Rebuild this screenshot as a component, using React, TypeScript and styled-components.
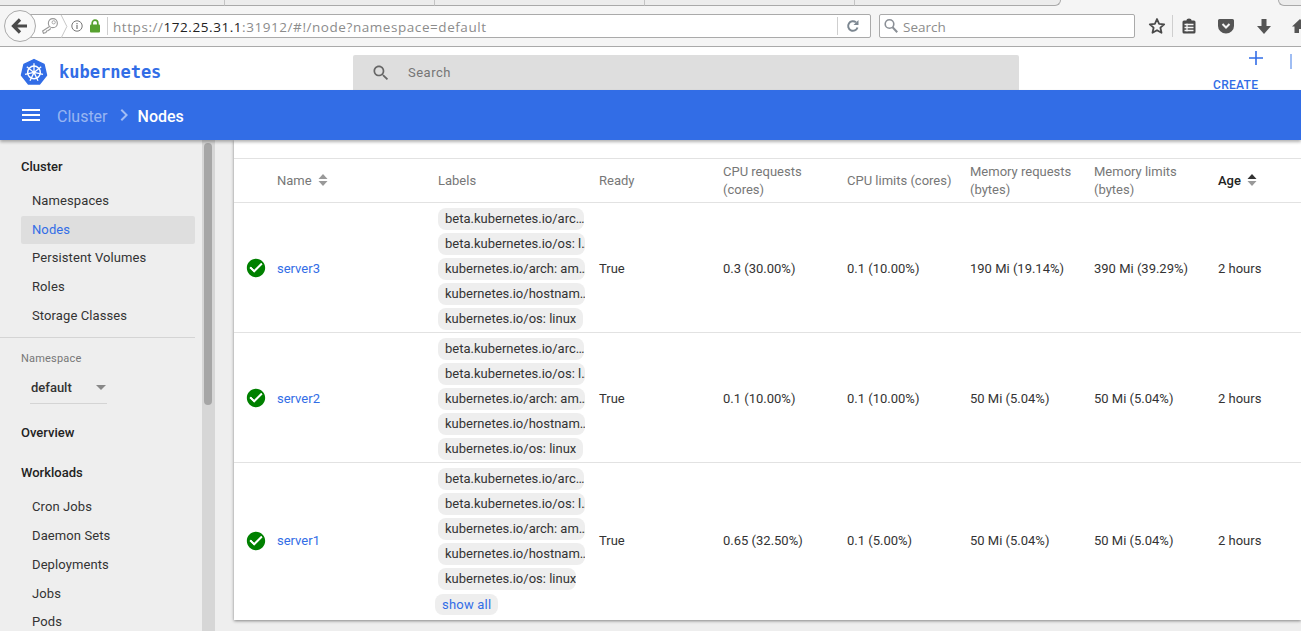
import styled, { createGlobalStyle } from 'styled-components'

type Node = {
  name: string
  cpuRequests: string
  cpuLimits: string
  memRequests: string
  memLimits: string
  showAll?: boolean
}

const labels = [
  'beta.kubernetes.io/arc…',
  'beta.kubernetes.io/os: l…',
  'kubernetes.io/arch: am…',
  'kubernetes.io/hostnam…',
  'kubernetes.io/os: linux',
]

const nodes: Node[] = [
  { name: 'server3', cpuRequests: '0.3 (30.00%)', cpuLimits: '0.1 (10.00%)', memRequests: '190 Mi (19.14%)', memLimits: '390 Mi (39.29%)' },
  { name: 'server2', cpuRequests: '0.1 (10.00%)', cpuLimits: '0.1 (10.00%)', memRequests: '50 Mi (5.04%)', memLimits: '50 Mi (5.04%)' },
  { name: 'server1', cpuRequests: '0.65 (32.50%)', cpuLimits: '0.1 (5.00%)', memRequests: '50 Mi (5.04%)', memLimits: '50 Mi (5.04%)', showAll: true },
]

const spokes = [0, 1, 2, 3, 4, 5, 6].map((i) => (i * 360) / 7)

const heptagon = spokes
  .map((deg) => {
    const rad = ((deg - 90) * Math.PI) / 180
    return `${(14 + 12.8 * Math.cos(rad)).toFixed(2)},${(14.4 + 12.8 * Math.sin(rad)).toFixed(2)}`
  })
  .join(' ')

const KubeLogo = () => (
  <svg width='28' height='28' viewBox='0 0 28 28'>
    <polygon points={heptagon} fill='#326de6' stroke='#326de6' strokeWidth='1.5' strokeLinejoin='round' />
    <circle cx='14' cy='14.4' r='6.3' fill='none' stroke='#fff' strokeWidth='1.5' />
    <circle cx='14' cy='14.4' r='1.5' fill='#fff' />
    {spokes.map((deg) => (
      <line key={deg} x1='14' y1='14.4' x2='14' y2='5.2' stroke='#fff' strokeWidth='1.3' transform={`rotate(${deg} 14 14.4)`} />
    ))}
  </svg>
)

const SortIcon = ({ active }: { active?: boolean }) => (
  <SortSvg width='10' height='14' viewBox='0 0 10 14'>
    <path d='M5 1l4.5 5h-9z' fill={active ? '#333' : '#999'} />
    <path d='M5 13l4.5-5h-9z' fill='#999' />
  </SortSvg>
)

const CheckCircle = () => (
  <svg width='22' height='22' viewBox='0 0 24 24'>
    <path fill='#008000' d='M12 2C6.48 2 2 6.48 2 12s4.48 10 10 10 10-4.48 10-10S17.52 2 12 2zm-2 15l-5-5 1.41-1.41L10 14.17l7.59-7.59L19 8l-9 9z' />
    <path fill='#fff' d='M10 17l-5-5 1.41-1.41L10 14.17l7.59-7.59L19 8z' />
  </svg>
)

const App = () => {
  return (
    <Page>
      <GlobalStyle />
      <TabStrip>
        <Tab />
        <Tab />
        <Tab />
        <Tab />
        <LastTab />
        <ActiveTab />
        <NextTab />
      </TabStrip>
      <Toolbar>
        <BackButton>
          <svg width='20' height='20' viewBox='0 0 20 20'>
            <path d='M10 3.5L3.5 10l6.5 6.5M4 10h13' fill='none' stroke='#4a4a4a' strokeWidth='3.2' />
          </svg>
        </BackButton>
        <UrlBar>
          <KeyIcon width='18' height='18' viewBox='0 0 22 22'>
            <circle cx='14.5' cy='7.5' r='5.5' fill='none' stroke='#999' strokeWidth='1.4' />
            <circle cx='15.500' cy='6.500' r='2' fill='none' stroke='#999' />
            <path d='M10.500 11.500L2 17l1 3 3-1 1-2 2-.5 3-2.500' fill='none' stroke='#999' strokeWidth='1.4' />
          </KeyIcon>
          <IdentityChevron width='8' height='23' viewBox='0 0 8 24'>
            <path d='M1 0l6 12-6 12' fill='none' stroke='#c4c4c4' />
          </IdentityChevron>
          <InfoIcon width='12' height='12' viewBox='0 0 12 12'>
            <circle cx='6' cy='6' r='5.2' fill='none' stroke='#777' />
            <path d='M6 5v4M6 3v1.2' stroke='#777' strokeWidth='1.2' />
          </InfoIcon>
          <LockIcon width='12' height='14' viewBox='0 0 12 14'>
            <rect x='1' y='5.500' width='10' height='8' rx='1' fill='#57a12f' />
            <path d='M3.200 6V4a2.800 2.800 0 0 1 5.600 0v2' fill='none' stroke='#57a12f' strokeWidth='1.7' />
          </LockIcon>
          <UrlDivider />
          <UrlText>
            https://<strong>172.25.31.1</strong>:31912/#!/node?namespace=default
          </UrlText>
          <ReloadDivider />
          <ReloadSlot>
            <svg width='14' height='14' viewBox='0 0 14 14'>
              <path d='M11.500 8.500A4.800 4.800 0 1 1 10 3.300' fill='none' stroke='#7c8791' strokeWidth='2' />
              <path d='M12.500 1v5h-5z' fill='#7c8791' />
            </svg>
          </ReloadSlot>
        </UrlBar>
        <SearchBar>
          <svg width='16' height='16' viewBox='0 0 16 16'>
            <circle cx='6.500' cy='6' r='4.300' fill='none' stroke='#8a8f96' strokeWidth='1.600' />
            <path d='M9.600 9.200l4.600 5' stroke='#8a8f96' strokeWidth='2' />
          </svg>
          <SearchBarText>Search</SearchBarText>
        </SearchBar>
        <ToolIcons>
          <svg width='18' height='18' viewBox='0 0 18 18'>
            <path d='M9 2l2.100 4.800 5.100.5-3.800 3.400 1.100 5.100L9 13.200l-4.500 2.600 1.100-5.100-3.800-3.400 5.100-.5z' fill='none' stroke='#4a4a4a' strokeWidth='1.800' strokeLinejoin='round' />
          </svg>
          <ToolDivider />
          <ClipSlot>
            <svg width='16' height='16' viewBox='0 0 16 16'>
              <path fill='#4a4a4a' d='M5.500 2.500V2a2.500 1.600 0 0 1 5 0v.5H13a1.500 1.500 0 0 1 1.500 1.500v10a1.500 1.500 0 0 1-1.500 1.500H3A1.500 1.500 0 0 1 1.500 14V4A1.500 1.500 0 0 1 3 2.500z' />
              <path stroke='#f5f5f5' strokeWidth='1.300' d='M3.500 6.500h9M3.500 9.500h9M3.500 12.500h9M6 5.500v8' />
            </svg>
          </ClipSlot>
          <PocketSlot>
            <svg width='16' height='16' viewBox='0 0 16 16'>
              <path fill='#555' d='M1.500 1h13A1.500 1.500 0 0 1 16 2.500V8a8 7.500 0 0 1-16 0V2.500A1.500 1.500 0 0 1 1.500 1z' />
              <path d='M4.500 6L8 9.500 11.500 6' fill='none' stroke='#f5f5f5' strokeWidth='2' />
            </svg>
          </PocketSlot>
          <DownloadSlot>
            <svg width='16' height='17' viewBox='0 0 16 17'>
              <path fill='#555' d='M5.500 1h5v7H15l-7 8-7-8h4.500z' />
            </svg>
          </DownloadSlot>
          <HomeSlot>
            <svg width='16' height='16' viewBox='0 0 16 16'>
              <path fill='#555' d='M8 1L0 8.500h2.500V15H7v-4h2v4h4.500V8.500H16z' />
            </svg>
          </HomeSlot>
        </ToolIcons>
      </Toolbar>

      <AppHeader>
        <Brand>
          <KubeLogo />
          <BrandName>kubernetes</BrandName>
        </Brand>
        <SearchBox>
          <svg width='20' height='20' viewBox='0 0 24 24'>
            <path fill='#666' d='M15.500 14h-.79l-.28-.27C15.410 12.590 16 11.110 16 9.500 16 5.910 13.090 3 9.500 3S3 5.910 3 9.500 5.910 16 9.500 16c1.610 0 3.090-.59 4.230-1.570l.27.28v.79l5 4.990L20.490 19l-4.990-5zm-6 0C7.010 14 5 11.990 5 9.500S7.010 5 9.500 5 14 7.010 14 9.500 11.990 14 9.500 14z' />
          </svg>
          <SearchPlaceholder>Search</SearchPlaceholder>
        </SearchBox>
        <CreateButton>
          <PlusIcon width='24' height='24' viewBox='0 0 24 24'>
            <path fill='#326de6' d='M19 12.800h-6.200V19h-1.600v-6.200H5v-1.600h6.200V5h1.600v6.200H19z' />
          </PlusIcon>
          <CreateLabel>CREATE</CreateLabel>
        </CreateButton>
        <HeaderTick />
      </AppHeader>

      <BlueBar>
        <svg width='24' height='24' viewBox='0 0 24 24'>
          <path fill='#fff' d='M3 18h18v-2H3v2zm0-5h18v-2H3v2zm0-7v2h18V6H3z' />
        </svg>
        <Crumb>Cluster</Crumb>
        <CrumbChevron width='24' height='24' viewBox='0 0 24 24'>
          <path fill='rgba(255,255,255,.55)' d='M10 6L8.590 7.410 13.170 12l-4.580 4.590L10 18l6-6z' />
        </CrumbChevron>
        <CrumbCurrent>Nodes</CrumbCurrent>
      </BlueBar>

      <Main>
        <Sidebar>
          <SectionTitle>Cluster</SectionTitle>
          <NavGroup>
            <NavItem>Namespaces</NavItem>
            <NavItem $active>Nodes</NavItem>
            <NavItem>Persistent Volumes</NavItem>
            <NavItem>Roles</NavItem>
            <NavItem>Storage Classes</NavItem>
          </NavGroup>
          <NavDivider />
          <NamespaceLabel>Namespace</NamespaceLabel>
          <NamespaceSelect>
            default
            <SelectArrow />
          </NamespaceSelect>
          <SectionTitle>Overview</SectionTitle>
          <WorkloadsTitle>Workloads</WorkloadsTitle>
          <NavGroup>
            <NavItem>Cron Jobs</NavItem>
            <NavItem>Daemon Sets</NavItem>
            <NavItem>Deployments</NavItem>
            <NavItem>Jobs</NavItem>
            <NavItem>Pods</NavItem>
          </NavGroup>
        </Sidebar>
        <ScrollTrack>
          <ScrollThumb />
        </ScrollTrack>
        <Content>
          <Card>
            <CardTop />
            <HeaderRow>
              <span />
              <HeadCell>
                Name <SortIcon />
              </HeadCell>
              <HeadCell>Labels</HeadCell>
              <HeadCell>Ready</HeadCell>
              <HeadCell>
                CPU requests
                <br />
                (cores)
              </HeadCell>
              <HeadCell>CPU limits (cores)</HeadCell>
              <HeadCell>
                Memory requests
                <br />
                (bytes)
              </HeadCell>
              <HeadCell>
                Memory limits
                <br />
                (bytes)
              </HeadCell>
              <HeadCell $active>
                Age <SortIcon active />
              </HeadCell>
            </HeaderRow>
            {nodes.map((node) => (
              <Row key={node.name}>
                <StatusCell>
                  <CheckCircle />
                </StatusCell>
                <NodeLink>{node.name}</NodeLink>
                <ChipList>
                  {labels.map((label) => (
                    <Chip key={label}>{label}</Chip>
                  ))}
                  {node.showAll && <ShowAll>show all</ShowAll>}
                </ChipList>
                <Cell>True</Cell>
                <Cell>{node.cpuRequests}</Cell>
                <Cell>{node.cpuLimits}</Cell>
                <Cell>{node.memRequests}</Cell>
                <Cell>{node.memLimits}</Cell>
                <Cell>2 hours</Cell>
              </Row>
            ))}
          </Card>
        </Content>
      </Main>
    </Page>
  )
}

export default App

const GlobalStyle = createGlobalStyle`
  html, body {
    margin: 0;
    height: 100%;
    overflow: hidden;
    background: #eeeeee;
    font-family: Roboto, "Liberation Sans", sans-serif;
  }
  * {
    box-sizing: border-box;
  }
`

const columns = '43px 161px 161px 124px 124px 123px 124px 124px 1fr'

const Page = styled.div`
  width: 1301px;
  height: 631px;
  overflow: hidden;
  display: flex;
  flex-direction: column;
`

const TabStrip = styled.div`
  height: 6px;
  flex: none;
  display: flex;
  background: #f5f5f5;
`

const Tab = styled.div`
  width: 225px;
  height: 6px;
  background: #ececec;
  border-bottom: 1px solid #a9a9a9;
  border-right: 1px solid #c4c4c4;
  &:nth-child(n + 2) {
    width: 210px;
  }
`

const LastTab = styled.div`
  width: 206px;
  height: 6px;
  background: #ececec;
  border-bottom: 1px solid #a9a9a9;
  border-right: 1px solid #a9a9a9;
  border-bottom-right-radius: 6px;
`

const ActiveTab = styled.div`
  width: 217px;
`

const NextTab = styled.div`
  flex: 1;
  border-bottom: 1px solid #a9a9a9;
  border-left: 1px solid #a9a9a9;
  border-bottom-left-radius: 6px;
  background: #ececec;
`

const Toolbar = styled.div`
  height: 41px;
  flex: none;
  display: flex;
  align-items: center;
  padding: 0 0 0 20px;
  background: #f5f5f5;
  border-bottom: 1px solid #aaaaaa;
  position: relative;
`

const BackButton = styled.div`
  position: absolute;
  left: 4px;
  top: 4px;
  z-index: 1;
  width: 32px;
  height: 32px;
  border-radius: 50%;
  border: 1px solid #aaaaaa;
  background: #f8f8f8;
  display: flex;
  align-items: center;
  justify-content: center;
`

const UrlBar = styled.div`
  width: 851px;
  flex: none;
  height: 24px;
  display: flex;
  align-items: center;
  padding-left: 20px;
  background: #ffffff;
  border: 1px solid #aaaaaa;
  border-radius: 2px;
`

const KeyIcon = styled.svg`
  flex: none;
`

const IdentityChevron = styled.svg`
  flex: none;
  margin-left: 1px;
`

const InfoIcon = styled.svg`
  flex: none;
  margin-left: 3px;
`

const LockIcon = styled.svg`
  flex: none;
  margin-left: 6px;
`

const UrlDivider = styled.div`
  width: 1px;
  height: 18px;
  background: #cfcfcf;
  margin: 0 5px 0 6px;
`

const ReloadDivider = styled(UrlDivider)`
  margin: 0;
`

const UrlText = styled.span`
  flex: 1;
  padding-top: 2px;
  font-family: "Open Sans", sans-serif;
  font-size: 13.5px;
  letter-spacing: 0.56px;
  color: #8c8c8c;
  strong {
    font-weight: 400;
    color: #222;
  }
`

const ReloadSlot = styled.div`
  width: 32px;
  display: flex;
  justify-content: center;
  padding-right: 3px;
`

const SearchBar = styled.div`
  width: 256px;
  flex: none;
  height: 24px;
  margin-left: 8px;
  display: flex;
  align-items: center;
  gap: 4px;
  padding-left: 3px;
  background: #fff;
  border: 1px solid #aaaaaa;
  border-radius: 2px;
`

const SearchBarText = styled.span`
  padding-top: 2px;
  font-family: "Open Sans", sans-serif;
  font-size: 13.5px;
  color: #8c8c8c;
`

const ToolIcons = styled.div`
  display: flex;
  flex: none;
  align-items: center;
  margin-left: 13px;
`

const ToolDivider = styled.div`
  width: 1px;
  height: 22px;
  background: #cfcfcf;
  margin-left: 6px;
`

const ClipSlot = styled.div`
  display: flex;
  margin-left: 8px;
`

const PocketSlot = styled.div`
  display: flex;
  margin-left: 21px;
`

const DownloadSlot = styled.div`
  display: flex;
  margin-left: 22px;
`

const HomeSlot = styled.div`
  display: flex;
  margin-left: 20px;
`

const AppHeader = styled.header`
  height: 43px;
  flex: none;
  display: flex;
  background: #ffffff;
  overflow: hidden;
`

const Brand = styled.div`
  width: 353px;
  display: flex;
  align-items: center;
  padding: 7px 0 0 20px;
  gap: 11px;
`

const BrandName = styled.span`
  font-family: "DejaVu Sans Mono", monospace;
  font-size: 17px;
  font-weight: 700;
  color: #326de6;
`

const SearchBox = styled.div`
  width: 666px;
  height: 35px;
  margin-top: 8px;
  display: flex;
  align-items: center;
  padding-left: 18px;
  gap: 17px;
  background: #dedede;
  border-radius: 2px 2px 0 0;
`

const SearchPlaceholder = styled.span`
  font-size: 13px;
  letter-spacing: 0.5px;
  color: #757575;
`

const CreateButton = styled.div`
  width: 46px;
  margin-left: 194px;
  display: flex;
  flex-direction: column;
  align-items: flex-start;
`

const PlusIcon = styled.svg`
  flex: none;
  align-self: flex-end;
  margin: -1px -9px 0 0;
`

const CreateLabel = styled.span`
  margin-top: 8px;
  font-size: 12px;
  font-weight: 500;
  letter-spacing: 0.3px;
  color: #326de6;
  line-height: 14px;
`

const HeaderTick = styled.div`
  width: 2px;
  height: 15px;
  margin: 7px 0 0 31px;
  background: #9fbdf3;
`

const BlueBar = styled.div`
  height: 50px;
  flex: none;
  display: flex;
  align-items: center;
  padding-left: 19px;
  background: #326de6;
  box-shadow: 0 2px 3px rgba(0, 0, 0, 0.3);
  position: relative;
  z-index: 2;
`

const Crumb = styled.span`
  margin: 2px 0 0 14px;
  font-size: 16px;
  color: rgba(255, 255, 255, 0.5);
`

const CrumbChevron = styled.svg`
  flex: none;
  margin-left: 4px;
`

const CrumbCurrent = styled.span`
  margin: 2px 0 0 2px;
  font-size: 16px;
  font-weight: 500;
  color: #fff;
`

const Main = styled.div`
  flex: 1;
  min-height: 0;
  display: flex;
`

const Sidebar = styled.nav`
  width: 202px;
  flex: none;
  padding: 17px 7px 0 0;
  background: #eeeeee;
  overflow: hidden;
  font-size: 13px;
`

const SectionTitle = styled.div`
  height: 20px;
  line-height: 20px;
  padding-left: 21px;
  font-weight: 500;
  color: #222;
`

const WorkloadsTitle = styled(SectionTitle)`
  margin-top: 20px;
`

const NavGroup = styled.div`
  display: flex;
  flex-direction: column;
  margin-top: 10px;
`

const NavItem = styled.div<{ $active?: boolean }>`
  height: 28.7px;
  line-height: 28.7px;
  margin-left: 21px;
  padding-left: 11px;
  border-radius: 2px;
  letter-spacing: 0.1px;
  white-space: nowrap;
  color: ${(p) => (p.$active ? '#326de6' : '#333')};
  background: ${(p) => (p.$active ? '#dedede' : 'transparent')};
`

const NavDivider = styled.div`
  height: 1px;
  margin-top: 7px;
  background: #d4d4d4;
`

const NamespaceLabel = styled.div`
  margin-top: 13px;
  padding-left: 21px;
  font-size: 11px;
  line-height: 15px;
  letter-spacing: 0.2px;
  color: #777;
`

const NamespaceSelect = styled.div`
  width: 77px;
  height: 32px;
  margin: 6px 0 19px 30px;
  padding: 0 1px;
  display: flex;
  align-items: center;
  justify-content: space-between;
  border-bottom: 1px solid #d4d4d4;
  font-weight: 500;
  color: #333;
`

const SelectArrow = styled.span`
  width: 0;
  height: 0;
  border-left: 5px solid transparent;
  border-right: 5px solid transparent;
  border-top: 5px solid #888;
`

const ScrollTrack = styled.div`
  width: 13px;
  flex: none;
  background: #d6d6d6;
  padding: 3px 2px;
`

const ScrollThumb = styled.div`
  width: 8px;
  height: 262px;
  border-radius: 4px;
  background: #a6a6a6;
`

const Content = styled.main`
  flex: 1;
  padding-left: 19px;
  background: #eeeeee;
`

const Card = styled.section`
  background: #ffffff;
  box-shadow: 0 1px 3px rgba(0, 0, 0, 0.45);
  font-size: 13px;
`

const CardTop = styled.div`
  height: 18px;
`

const HeaderRow = styled.div`
  display: grid;
  grid-template-columns: ${columns};
  height: 45px;
  align-items: center;
  border-top: 1px solid #e2e2e2;
  border-bottom: 1px solid #e2e2e2;
`

const HeadCell = styled.div<{ $active?: boolean }>`
  display: block;
  line-height: 18px;
  font-weight: ${(p) => (p.$active ? 500 : 400)};
  color: ${(p) => (p.$active ? '#222' : '#777')};
`

const SortSvg = styled.svg`
  margin-left: 3px;
  vertical-align: -2px;
`

const Row = styled.div`
  display: grid;
  grid-template-columns: ${columns};
  align-items: center;
  padding: 5px 0 2px;
  border-bottom: 1px solid #e2e2e2;
  &:last-child {
    border-bottom: none;
    padding-bottom: 5px;
  }
`

const StatusCell = styled.div`
  display: flex;
  padding: 0 0 2px 11px;
`

const NodeLink = styled.a`
  padding-bottom: 2px;
  color: #326de6;
`

const ChipList = styled.div`
  display: flex;
  flex-direction: column;
  align-items: flex-start;
  gap: 3px;
`

const Chip = styled.span`
  max-width: 147px;
  height: 22px;
  line-height: 21px;
  padding-left: 7px;
  border-radius: 8px;
  background: #eeeeee;
  color: #333;
  white-space: nowrap;
  overflow: hidden;
  &:last-of-type {
    padding-right: 7px;
  }
`

const ShowAll = styled.span`
  height: 21px;
  line-height: 21px;
  margin: 1px 0 0 -3px;
  padding: 0 7px;
  border-radius: 8px;
  background: #eeeeee;
  color: #326de6;
  letter-spacing: 0.2px;
`

const Cell = styled.div`
  padding-bottom: 2px;
  color: #333;
  white-space: nowrap;
`
